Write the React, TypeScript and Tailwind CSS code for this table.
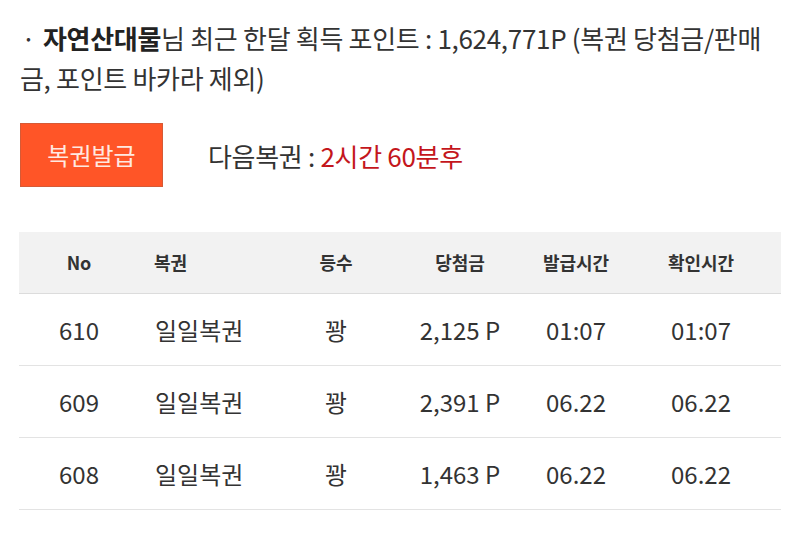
import React from "react"

const rows = [
  { no: "610", name: "일일복권", rank: "꽝", prize: "2,125 P", issued: "01:07", checked: "01:07" },
  { no: "609", name: "일일복권", rank: "꽝", prize: "2,391 P", issued: "06.22", checked: "06.22" },
  { no: "608", name: "일일복권", rank: "꽝", prize: "1,463 P", issued: "06.22", checked: "06.22" },
  { no: "607", name: "일일복권", rank: "꽝", prize: "1,020 P", issued: "06.22", checked: "06.22" },
]

const cols = "grid grid-cols-[120px_151px_92px_156px_76px_167px]"

export default function App() {
  return (
    <div
      className="w-[800px] h-[534px] overflow-hidden bg-white text-[#333]"
      style={{ fontFamily: '"Noto Sans CJK KR", "Noto Sans", sans-serif' }}
    >
      <div className="px-5 pt-[18px]">
        <p className="text-[26px] leading-[40px] tracking-[-0.3px]">
          <span className="inline-block w-[17px] mr-[6px] text-center">·</span>
          <b className="font-bold text-[#222]">자연산대물</b>님 최근 한달 획득 포인트 : 1,624,771P (복권 당첨금/판매금, 포인트 바카라 제외)
        </p>

        <div className="mt-[25px] flex items-center">
          <button className="w-[143px] h-[64px] bg-[#ff5527] border border-[#d65a36] text-[#ffe9e1] text-[24px]">
            복권발급
          </button>
          <div className="ml-[45px] text-[26px] tracking-[-0.3px]">
            다음복권 : <span className="text-[#c4161c]">2시간 60분후</span>
          </div>
        </div>
      </div>

      <div className="mx-[19px] mt-[45px] w-[762px]">
        <div className={`${cols} h-[62px] items-center bg-[#f2f2f2] border-b border-[#dcdcdc] text-[18px] font-bold text-[#333]`}>
          <div className="text-center">No</div>
          <div className="pl-[15px]">복권</div>
          <div className="text-center">등수</div>
          <div className="text-center">당첨금</div>
          <div className="text-center">발급시간</div>
          <div className="text-center pl-[7px]">확인시간</div>
        </div>
        {rows.map((r) => (
          <div key={r.no} className={`${cols} h-[72px] items-center border-b border-[#e3e3e3] text-[24px] text-[#333]`}>
            <div className="text-center">{r.no}</div>
            <div className="pl-[16px]">{r.name}</div>
            <div className="text-center">{r.rank}</div>
            <div className="text-center">{r.prize}</div>
            <div className="text-center">{r.issued}</div>
            <div className="text-center pl-[7px]">{r.checked}</div>
          </div>
        ))}
      </div>
    </div>
  )
}
